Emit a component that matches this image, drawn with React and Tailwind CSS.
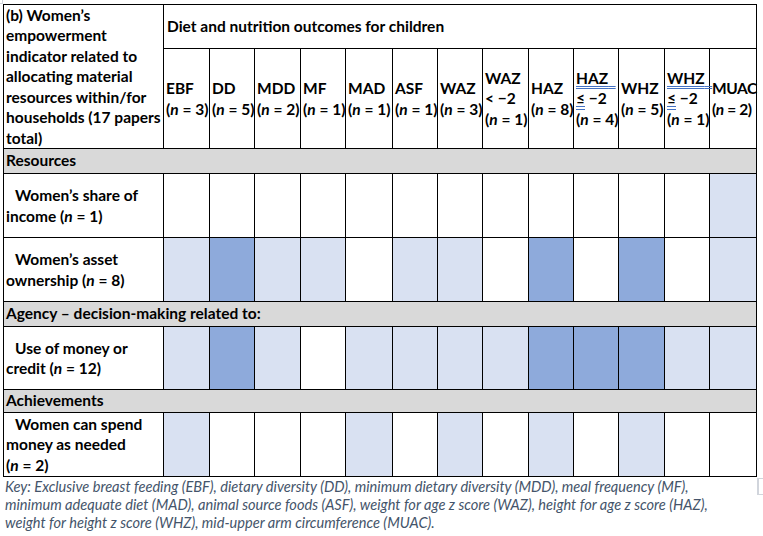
import React from "react";

const L = "bg-[#d9e1f2]";
const D = "bg-[#8eaadb]";
const W = "bg-white";

const cols = [
  { top: ["EBF"], n: 3 },
  { top: ["DD"], n: 5 },
  { top: ["MDD"], n: 2 },
  { top: ["MF"], n: 1 },
  { top: ["MAD"], n: 1 },
  { top: ["ASF"], n: 1 },
  { top: ["WAZ"], n: 3 },
  { top: ["WAZ", "< \u22122"], n: 1 },
  { top: ["HAZ"], n: 8 },
  { top: ["HAZ", "\u2264 \u22122"], n: 4, marked: true },
  { top: ["WHZ"], n: 5 },
  { top: ["WHZ", "\u2264 \u22122"], n: 1, marked: true },
  { top: ["MUAC"], n: 2, tight: true },
];

const rows = [
  { section: "Resources" },
  {
    label: ["Women\u2019s share of", "income"],
    n: 1,
    fills: [W, W, W, W, W, W, W, W, W, W, W, W, L],
  },
  {
    label: ["Women\u2019s asset", "ownership"],
    n: 8,
    fills: [L, D, L, L, W, L, L, W, D, W, D, W, L],
  },
  { section: "Agency \u2013 decision-making related to:" },
  {
    label: ["Use of money or", "credit"],
    n: 12,
    fills: [L, D, L, W, L, L, L, L, D, D, D, L, L],
  },
  { section: "Achievements" },
  {
    label: ["Women can spend", "money as needed", ""],
    n: 2,
    fills: [L, W, W, W, L, W, L, W, L, W, L, W, W],
  },
];

const N = ({ n }) => (
  <span className="whitespace-nowrap">
    (<i>n</i> = {n})
  </span>
);

const cell = "border-r border-b border-black";

const ColHead = ({ c }) => (
  <div
    className={`${cell} flex flex-col justify-center pl-[2px] leading-[20.5px] whitespace-nowrap ${
      c.tight ? "tracking-[-0.4px]" : ""
    }`}
  >
    {c.marked ? (
      <>
        <span className="underline decoration-double decoration-[#4472c4] underline-offset-2">{c.top[0]}&nbsp;&nbsp;</span>
        <span>
          <span className="underline decoration-double decoration-[#4472c4] underline-offset-2">{"\u2264"}</span>
          {" \u22122"}
        </span>
      </>
    ) : (
      c.top.map((t, i) => <span key={i}>{t}</span>)
    )}
    <N n={c.n} />
  </div>
);

export default function App() {
  return (
    <div className="w-[763px] h-[536px] bg-white relative pl-[3px] pt-[4px] font-['Lato',sans-serif] text-black">
      <div className="absolute left-0 top-0 w-[3px] h-[4px] border-r border-b border-gray-300" />
      <div className="grid grid-cols-[160px_46px_45px_46px_45px_47px_45px_45px_46px_45px_45px_46px_45px_47px] grid-rows-[44px_100px_25px_64px_64px_25px_63px_23px_64px] w-[754px] border-l border-t border-black text-[15.5px] font-bold">
        <div className={`${cell} row-span-2 pl-[2px] leading-[20.5px] flex flex-col justify-center whitespace-nowrap`}>
          <span>(b) Women’s</span>
          <span>empowerment</span>
          <span>indicator related to</span>
          <span>allocating material</span>
          <span>resources within/for</span>
          <span>households (17 papers</span>
          <span>total)</span>
        </div>
        <div className={`${cell} col-span-13 flex items-center pl-[3px]`}>
          Diet and nutrition outcomes for children
        </div>
        {cols.map((c, i) => (
          <ColHead key={i} c={c} />
        ))}
        {rows.map((r, ri) =>
          r.section ? (
            <div key={ri} className={`${cell} col-span-14 bg-[#d9d9d9] flex items-center pl-[2px]`}>
              {r.section}
            </div>
          ) : (
            <React.Fragment key={ri}>
              <div className={`${cell} flex flex-col justify-center pl-[2px] leading-[20.5px] whitespace-nowrap`}>
                <span className="pl-[9px]">{r.label[0]}</span>
                {r.label.length === 2 ? (
                  <span>
                    {r.label[1]} <N n={r.n} />
                  </span>
                ) : (
                  <>
                    <span>{r.label[1]}</span>
                    <N n={r.n} />
                  </>
                )}
              </div>
              {r.fills.map((f, ci) => (
                <div key={ci} className={`${cell} ${f}`} />
              ))}
            </React.Fragment>
          )
        )}
      </div>
      <div className="absolute left-[757px] top-[478px] w-[6px] h-[17px] border-l-2 border-t border-b border-gray-300" />
      <div className="mt-[1px] pl-[2px] text-[14.6px] leading-[18px] italic text-[#44546a] whitespace-nowrap">
        <div>Key: Exclusive breast feeding (EBF), dietary diversity (DD), minimum dietary diversity (MDD), meal frequency (MF),</div>
        <div>minimum adequate diet (MAD), animal source foods (ASF), weight for age z score (WAZ), height for age z score (HAZ),</div>
        <div>weight for height z score (WHZ), mid-upper arm circumference (MUAC).</div>
      </div>
    </div>
  );
}
